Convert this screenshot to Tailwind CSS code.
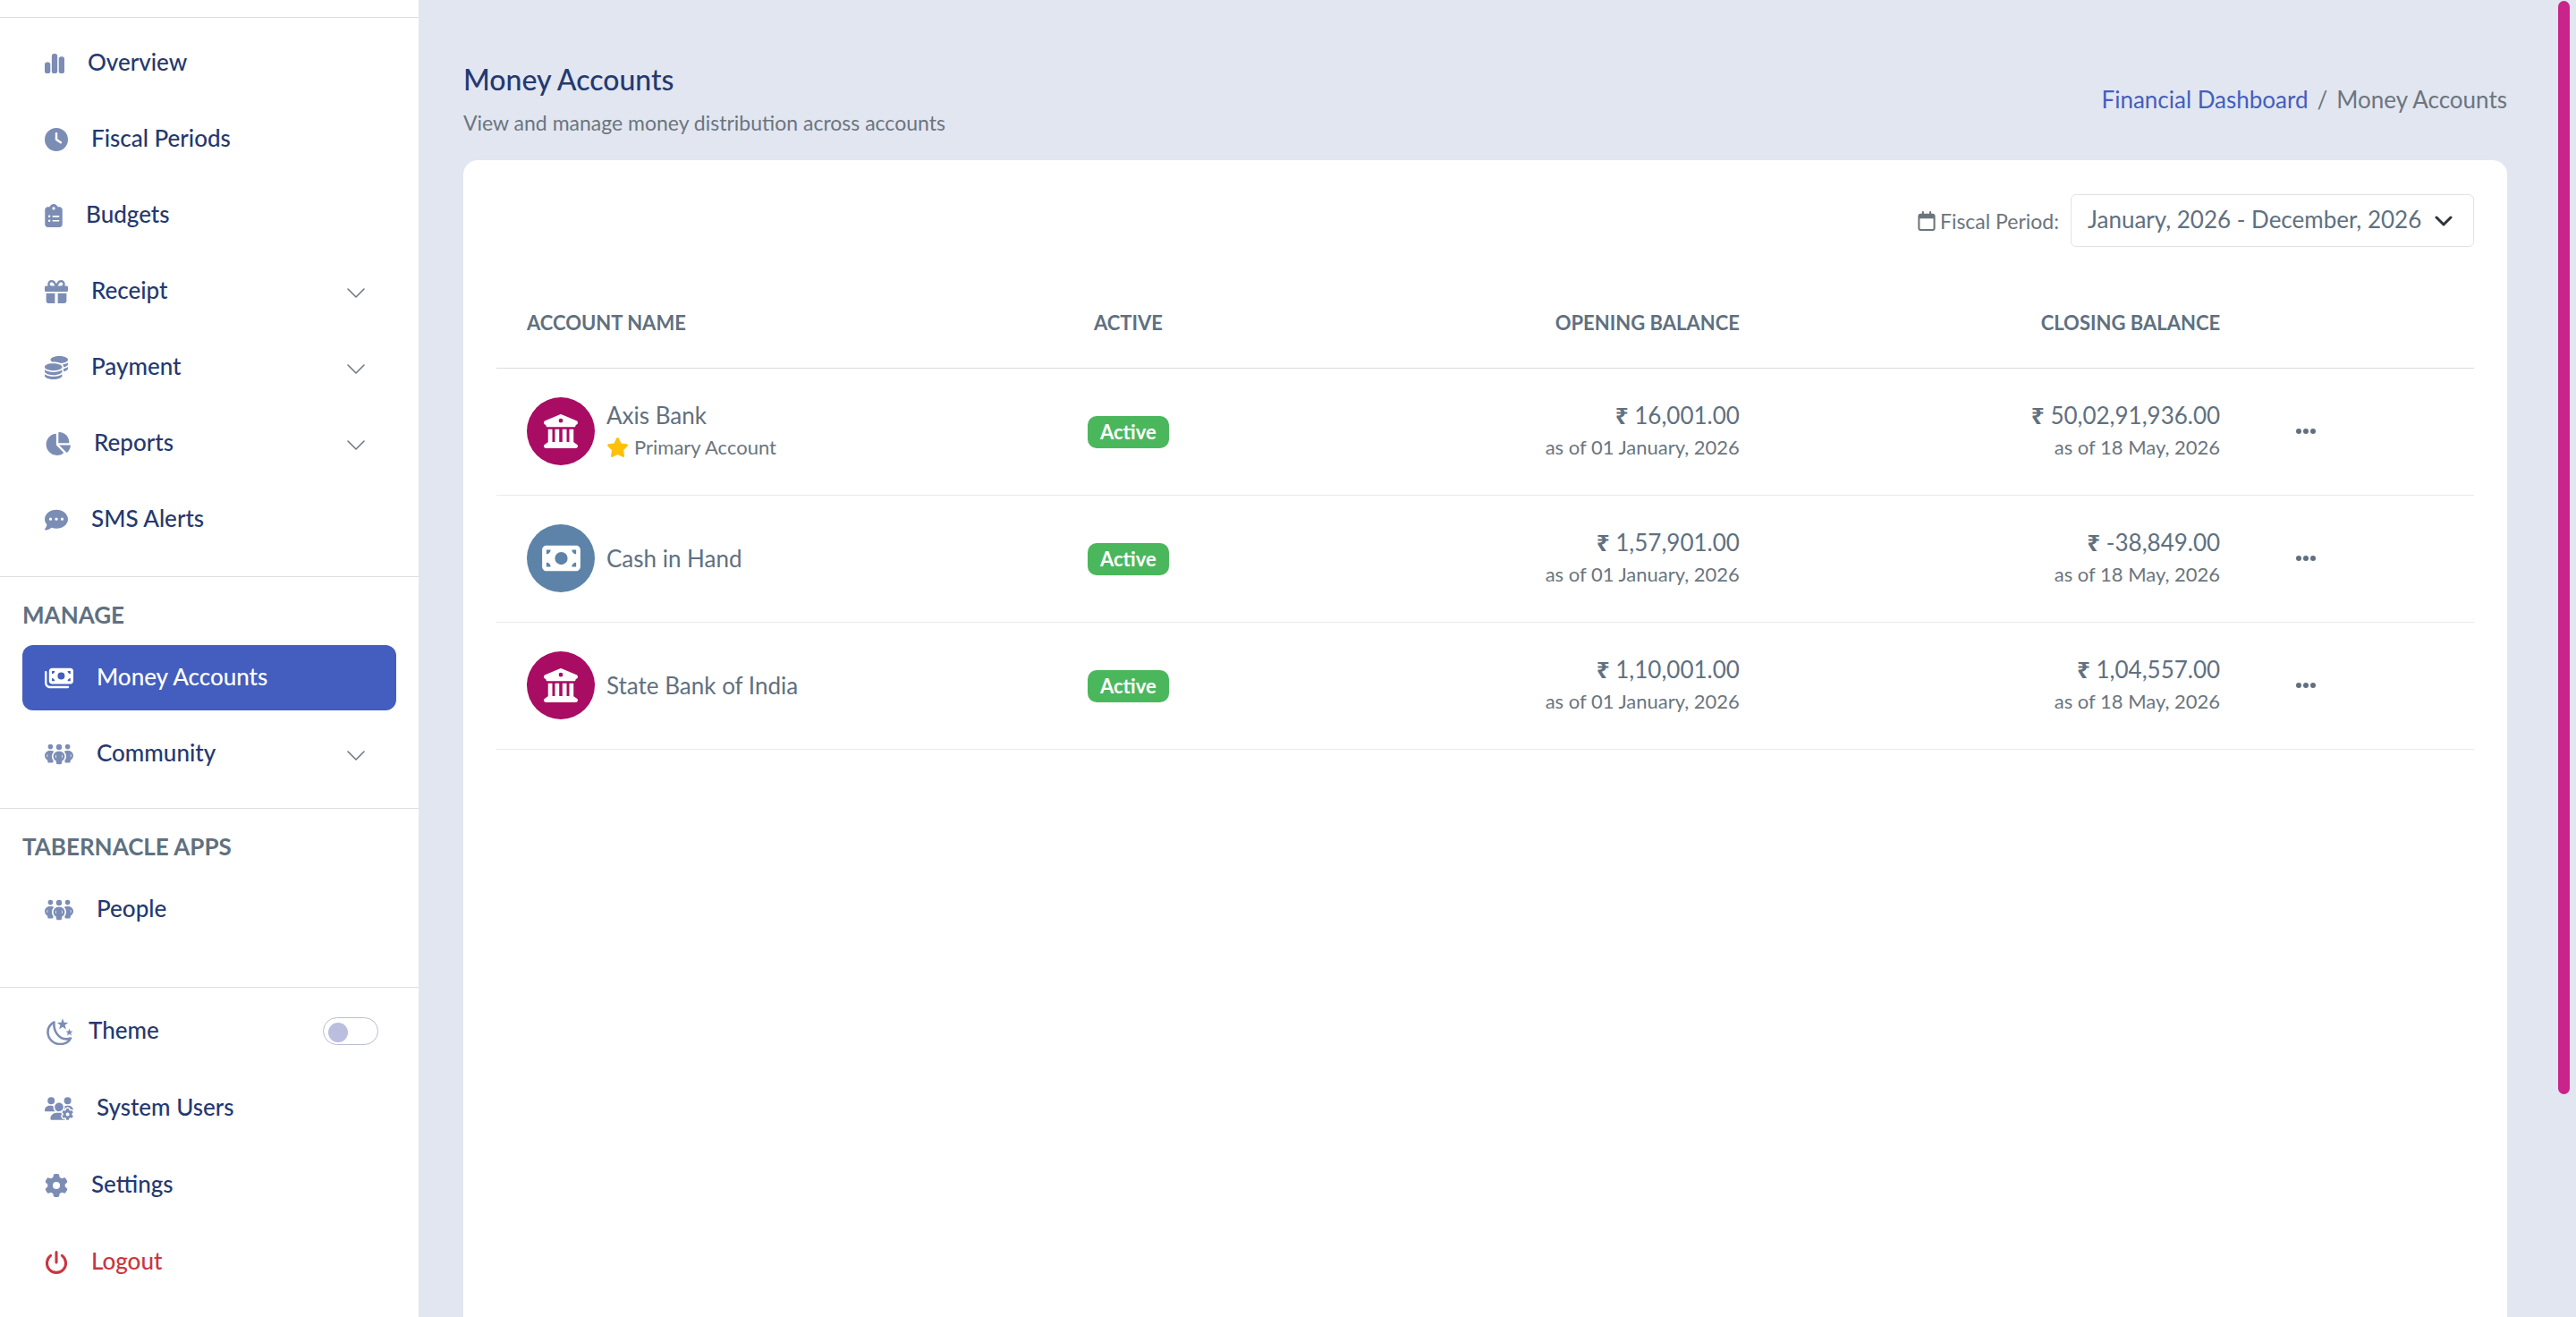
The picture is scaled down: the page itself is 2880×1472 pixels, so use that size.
<!DOCTYPE html>
<html lang="en">
<head>
<meta charset="utf-8">
<meta name="viewport" content="width=device-width, initial-scale=1">
<title>Money Accounts</title>
<script src="https://cdn.jsdelivr.net/npm/@tailwindcss/browser@4"></script>
</head>
<body class="flex min-h-screen bg-[#e2e6f1] font-['Lato','Noto_Sans',sans-serif] text-[26px] leading-9 text-[#607080]">

<!-- Shared icon shapes -->
<svg class="hidden" aria-hidden="true">
  <symbol id="people" viewBox="0 0 640 512"><path d="M72 88a56 56 0 1 1 112 0A56 56 0 1 1 72 88zM64 245.700C54 256.900 48 271.800 48 288s6 31.100 16 42.300V245.700zm144.400-49.300C178.700 222.700 160 261.200 160 304c0 34.300 12 65.800 32 90.500V416c0 17.700-14.300 32-32 32H96c-17.700 0-32-14.300-32-32V389.200C26.200 371.200 0 332.700 0 288c0-61.900 50.100-112 112-112h32c24 0 46.200 7.500 64.400 20.300zM448 416V394.500c20-24.700 32-56.200 32-90.500c0-42.800-18.700-81.300-48.400-107.700C449.800 183.500 472 176 496 176h32c61.900 0 112 50.100 112 112c0 44.700-26.200 83.200-64 101.200V416c0 17.700-14.300 32-32 32H480c-17.700 0-32-14.300-32-32zm8-328a56 56 0 1 1 112 0A56 56 0 1 1 456 88zM576 245.700v84.700c10-11.300 16-26.100 16-42.300s-6-31.100-16-42.300zM320 32a64 64 0 1 1 0 128 64 64 0 1 1 0-128zM240 304c0 16.200 6 31 16 42.300V261.700c-10 11.300-16 26.100-16 42.300zm144-42.300v84.700c10-11.300 16-26.100 16-42.300s-6-31.100-16-42.300zM448 304c0 44.700-26.200 83.200-64 101.200V448c0 17.700-14.300 32-32 32H288c-17.700 0-32-14.300-32-32V405.200c-37.800-18-64-56.500-64-101.200c0-61.900 50.100-112 112-112h32c61.900 0 112 50.100 112 112z"/></symbol>
  <symbol id="bank" viewBox="0 0 512 512"><path d="M243.400 2.600l-224 96c-14 6-21.800 21-18.700 35.800S16.800 160 32 160v8c0 13.300 10.700 24 24 24H456c13.300 0 24-10.700 24-24v-8c15.200 0 28.300-10.700 31.300-25.600s-4.800-29.900-18.700-35.800l-224-96c-8-3.400-17.200-3.400-25.200 0zM128 224H64V420.300c-.6 .3-1.200 .7-1.800 1.100l-48 32c-11.700 7.800-17 22.400-12.900 35.900S17.900 512 32 512H480c14.100 0 26.500-9.200 30.600-22.700s-1.100-28.100-12.900-35.900l-48-32c-.6-.4-1.200-.7-1.800-1.100V224H384V416H344V224H280V416H232V224H168V416H128V224zM256 64a32 32 0 1 1 0 64 32 32 0 1 1 0-64z"/></symbol>
  <symbol id="chevron" viewBox="0 0 20 12"><path d="M1 1l9 9 9-9" fill="none" stroke="currentColor" stroke-width="1.500" stroke-linecap="round"/></symbol>
  <symbol id="dots" viewBox="0 0 24 8"><circle cx="4" cy="4" r="3"/><circle cx="12" cy="4" r="3"/><circle cx="20" cy="4" r="3"/></symbol>
</svg>

<aside class="w-[468px] shrink-0 bg-white pt-[19px] font-medium text-[#25396f]">
  <nav aria-label="Main" class="[&_label]:pb-1 [&_span]:pb-1">
    <ul class="flex flex-col gap-3 border-t border-[#dcdfe2] px-[25px] pt-[14px] pb-[27px]">
      <li><a href="#" class="flex h-[73px] items-center gap-[26px] rounded-xl px-[25px]">
        <svg class="h-[26px] w-[22px] fill-[#7c8db5]" viewBox="0 0 448 512"><path d="M160 80c0-26.500 21.500-48 48-48h32c26.500 0 48 21.500 48 48V432c0 26.500-21.500 48-48 48H208c-26.500 0-48-21.500-48-48V80zM0 272c0-26.500 21.500-48 48-48H80c26.500 0 48 21.500 48 48V432c0 26.500-21.500 48-48 48H48c-26.500 0-48-21.500-48-48V272zM368 96h32c26.500 0 48 21.500 48 48V432c0 26.500-21.500 48-48 48H368c-26.500 0-48-21.500-48-48V144c0-26.500 21.500-48 48-48z"/></svg>
        <span>Overview</span></a></li>
      <li><a href="#" class="flex h-[73px] items-center gap-[26px] rounded-xl px-[25px]">
        <svg class="size-[26px] fill-[#7c8db5]" viewBox="0 0 512 512"><path fill-rule="evenodd" d="M256 0a256 256 0 1 1 0 512A256 256 0 1 1 256 0zM232 120V256c0 8 4 15.500 10.700 20l96 64c11 7.400 25.900 4.400 33.300-6.700s4.400-25.900-6.700-33.300L280 243.200V120c0-13.300-10.700-24-24-24s-24 10.700-24 24z"/></svg>
        <span>Fiscal Periods</span></a></li>
      <li><a href="#" class="flex h-[73px] items-center gap-[26px] rounded-xl px-[25px]">
        <svg class="h-[26px] w-[20px] fill-[#7c8db5]" viewBox="0 0 384 512"><path fill-rule="evenodd" d="M192 0c-41.800 0-77.400 26.700-90.500 64H64C28.700 64 0 92.700 0 128V448c0 35.300 28.700 64 64 64H320c35.300 0 64-28.700 64-64V128c0-35.300-28.700-64-64-64H282.500C269.400 26.700 233.800 0 192 0zm0 64a32 32 0 1 1 0 64 32 32 0 1 1 0-64zM72 272a24 24 0 1 1 48 0 24 24 0 1 1 -48 0zm104-16H304c8.800 0 16 7.200 16 16s-7.200 16-16 16H176c-8.800 0-16-7.200-16-16s7.200-16 16-16zM72 368a24 24 0 1 1 48 0 24 24 0 1 1 -48 0zm88 0c0-8.800 7.200-16 16-16H304c8.800 0 16 7.200 16 16s-7.200 16-16 16H176c-8.800 0-16-7.200-16-16z"/></svg>
        <span>Budgets</span></a></li>
      <li><a href="#" class="flex h-[73px] items-center gap-[26px] rounded-xl pr-[35px] pl-[25px]">
        <svg class="size-[26px] fill-[#7c8db5]" viewBox="0 0 512 512"><path d="M190.500 68.800L225.300 128H224 152c-22.100 0-40-17.900-40-40s17.900-40 40-40h2.200c14.900 0 28.800 7.900 36.300 20.800zM64 88c0 14.400 3.500 28 9.600 40H32c-17.700 0-32 14.300-32 32v64c0 17.700 14.300 32 32 32H480c17.700 0 32-14.300 32-32V160c0-17.700-14.300-32-32-32H438.400c6.100-12 9.600-25.600 9.600-40c0-48.600-39.400-88-88-88h-2.200c-31.900 0-61.500 16.900-77.700 44.400L256 85.500l-24.100-41C215.700 16.900 186.100 0 154.200 0H152C103.400 0 64 39.400 64 88zm336 0c0 22.100-17.900 40-40 40H288h-1.300l34.800-59.200C329.100 55.900 342.900 48 357.800 48H360c22.100 0 40 17.900 40 40zM32 288V464c0 26.500 21.500 48 48 48H224V288H32zM288 512H432c26.500 0 48-21.500 48-48V288H288V512z"/></svg>
        <span class="grow">Receipt</span>
        <svg class="mt-1 h-3 w-5 text-[#6c757d]"><use href="#chevron"/></svg></a></li>
      <li><a href="#" class="flex h-[73px] items-center gap-[26px] rounded-xl pr-[35px] pl-[25px]">
        <svg class="size-[26px] fill-[#7c8db5]" viewBox="0 0 512 512"><path d="M512 80c0 18-14.300 34.600-38.400 48c-29.100 16.100-72.500 27.500-122.300 30.900c-3.700-1.800-7.400-3.500-11.300-5C300.600 137.400 248.200 128 192 128c-8.300 0-16.400 .2-24.500 .6l-1.100-.6C142.300 114.600 128 98 128 80c0-44.200 86-80 192-80S512 35.800 512 80zM160.700 161.100c10.200-.7 20.700-1.100 31.300-1.100c62.200 0 117.400 12.300 152.500 31.400C369.300 204.900 384 221.700 384 240c0 4-.7 7.900-2.100 11.700c-4.600 13.200-17 25.300-35 35.500c-.4 .2-.9 .5-1.300 .7c-35 19.400-90.800 32-153.600 32c-59.600 0-112.900-11.300-148.200-29.100c-1.900-.9-3.700-1.900-5.500-2.900C14.300 274.600 0 258 0 240c0-34.800 53.400-64.500 128-75.400c10.500-1.500 21.400-2.700 32.700-3.500zM416 240c0-21.900-10.600-39.900-24.100-53.400c28.300-4.400 54.200-11.400 76.200-20.500c16.300-6.800 31.500-15.200 43.900-25.500V176c0 19.300-16.500 37.100-43.800 50.900c-14.600 7.400-32.400 13.700-52.400 18.500c.1-1.800 .2-3.500 .2-5.300zm-32 96c0 18-14.300 34.600-38.400 48c-1.800 1-3.600 1.900-5.500 2.900C304.900 404.700 251.600 416 192 416c-62.800 0-118.600-12.600-153.600-32C14.300 370.600 0 354 0 336V300.600c12.500 10.300 27.600 18.700 43.900 25.500C83.400 342.600 135.800 352 192 352s108.600-9.400 148.100-25.900c7.800-3.200 15.300-6.900 22.400-10.900c6.100-3.400 11.800-7.200 17.200-11.200c1.500-1.100 2.900-2.300 4.300-3.400V336zm32 0V278.100c19-4.200 36.500-9.500 52.100-16c16.300-6.800 31.500-15.200 43.900-25.500V272c0 10.500-5 21-14.900 30.900c-16.300 16.300-45 29.700-81.300 38.400c.1-1.700 .2-3.500 .2-5.300zM192 448c56.200 0 108.600-9.400 148.100-25.900c16.300-6.800 31.500-15.200 43.900-25.500V432c0 44.200-86 80-192 80S0 476.200 0 432V396.600c12.500 10.300 27.600 18.700 43.900 25.500C83.400 438.600 135.800 448 192 448z"/></svg>
        <span class="grow">Payment</span>
        <svg class="mt-1 h-3 w-5 text-[#6c757d]"><use href="#chevron"/></svg></a></li>
      <li><a href="#" class="flex h-[73px] items-center gap-[26px] rounded-xl pr-[35px] pl-[25px]">
        <svg class="h-[26px] w-[29px] fill-[#7c8db5]" viewBox="0 0 576 512"><path d="M304 240V16.600c0-9 7-16.600 16-16.600C443.700 0 544 100.300 544 224c0 9-7.600 16-16.600 16H304zM32 272C32 150.700 122.100 50.300 239 34.300c9.200-1.300 17 6.100 17 15.400V288L412.500 444.500c6.700 6.700 6.200 17.700-1.500 23.100C371.800 495.600 323.800 512 272 512C139.500 512 32 404.600 32 272zm526.400 16c9.300 0 16.600 7.800 15.400 17c-7.700 55.900-34.600 105.600-73.900 142.300c-6 5.600-15.400 5.200-21.200-.7L320 288H558.400z"/></svg>
        <span class="grow">Reports</span>
        <svg class="mt-1 h-3 w-5 text-[#6c757d]"><use href="#chevron"/></svg></a></li>
      <li><a href="#" class="flex h-[73px] items-center gap-[26px] rounded-xl px-[25px]">
        <svg class="size-[26px] fill-[#7c8db5]" viewBox="0 0 512 512"><path fill-rule="evenodd" d="M256 448c141.400 0 256-93.100 256-208S397.400 32 256 32S0 125.100 0 240c0 45.100 17.700 86.800 47.700 120.900c-1.900 24.500-11.400 46.300-21.400 62.900c-5.500 9.200-11.100 16.600-15.200 21.600c-2.100 2.500-3.700 4.400-4.900 5.700l-1.600 1.700c-4.600 4.600-5.900 11.400-3.400 17.400c2.500 6 8.300 9.900 14.800 9.900c28.700 0 57.600-8.900 81.600-19.300c22.900-10 42.400-21.900 54.300-30.600c31.800 11.500 67 17.900 104.100 17.900zM128 208a32 32 0 1 1 0 64 32 32 0 1 1 0-64zm128 0a32 32 0 1 1 0 64 32 32 0 1 1 0-64zm96 32a32 32 0 1 1 64 0 32 32 0 1 1 -64 0z"/></svg>
        <span>SMS Alerts</span></a></li>
    </ul>

    <section class="border-t border-[#dcdfe2] px-[25px] pt-6 pb-6">
      <h2 class="pb-4 font-bold text-[#607080]">MANAGE</h2>
      <ul class="flex flex-col gap-3">
        <li><a href="#" aria-current="page" class="flex h-[73px] items-center gap-[26px] rounded-xl bg-[#435ebe] px-[25px] text-white">
          <svg class="h-[26px] w-8 fill-white" viewBox="0 0 640 512"><path fill-rule="evenodd" d="M96 96c0-35.300 28.700-64 64-64H576c35.300 0 64 28.700 64 64V320c0 35.300-28.700 64-64 64H160c-35.300 0-64-28.700-64-64V96zm64 160v64h64c0-35.300-28.700-64-64-64zM224 96H160v64c35.300 0 64-28.700 64-64zM576 256c-35.300 0-64 28.700-64 64h64V256zM512 96c0 35.300 28.700 64 64 64V96H512zM288 208a80 80 0 1 0 160 0 80 80 0 1 0 -160 0zM48 120c0-13.300-10.700-24-24-24S0 106.700 0 120V360c0 66.300 53.700 120 120 120H520c13.300 0 24-10.700 24-24s-10.700-24-24-24H120c-39.800 0-72-32.200-72-72V120z"/></svg>
          <span>Money Accounts</span></a></li>
        <li><a href="#" class="flex h-[73px] items-center gap-[26px] rounded-xl pr-[35px] pl-[25px]">
          <svg class="h-[26px] w-8 fill-[#7c8db5]"><use href="#people"/></svg>
          <span class="grow">Community</span>
          <svg class="mt-1 h-3 w-5 text-[#6c757d]"><use href="#chevron"/></svg></a></li>
      </ul>
    </section>

    <section class="border-t border-[#dcdfe2] px-[25px] pt-6 pb-[50px]">
      <h2 class="pb-4 font-bold text-[#607080]">TABERNACLE APPS</h2>
      <a href="#" class="flex h-[73px] items-center gap-[26px] rounded-xl px-[25px]">
        <svg class="h-[26px] w-8 fill-[#7c8db5]"><use href="#people"/></svg>
        <span>People</span></a>
    </section>

    <ul class="flex flex-col gap-[13px] border-t border-[#dcdfe2] px-[25px] pt-3">
      <li class="flex h-[73px] items-center gap-[17px] pr-5 pl-[27px]">
        <svg class="size-[30px] fill-[#7c8db5]" viewBox="0 0 30 30"><path fill="none" stroke="#7c8db5" stroke-width="2.600" stroke-linejoin="round" d="M8.500 4.500C3.500 7 1.300 12 1.500 16.500C2 23.500 8 29 15 29C20.500 29 25 26.500 27 22.500C21 24.500 15.500 22.500 12 18C9 14 8 9 8.500 4.500z"/><path d="M18 .2l1.600 4.500 4.700.2-3.700 2.900 1.300 4.600-3.900-2.600-3.900 2.600 1.300-4.600-3.700-2.900 4.700-.2zM25.500 11.800l1.100 2.800 2.900.1-2.300 1.800.8 2.900-2.500-1.600-2.500 1.600.8-2.900-2.300-1.800 2.900-.1z"/></svg>
        <label for="theme" class="grow">Theme</label>
        <input id="theme" type="checkbox" role="switch" class="h-[31px] w-[62px] appearance-none rounded-full border border-[#b9bdd2] bg-white px-[5px] pt-[5px] before:block before:size-[22px] before:rounded-full before:bg-[#babfe0] checked:before:ml-auto">
      </li>
      <li><a href="#" class="flex h-[73px] items-center gap-[26px] rounded-xl px-[25px]">
        <svg class="h-[26px] w-8 fill-[#7c8db5]" viewBox="0 0 640 512"><path d="M144 160A80 80 0 1 0 144 0a80 80 0 1 0 0 160zm368 0A80 80 0 1 0 512 0a80 80 0 1 0 0 160zM0 298.700C0 310.400 9.600 320 21.300 320H234.700c.2 0 .4 0 .7 0c-26.600-23.500-43.300-57.800-43.300-96c0-7.600 .7-15 1.900-22.300c-13.600-6.300-28.700-9.700-44.600-9.700H106.700C47.800 192 0 239.800 0 298.700zM320 320c24 0 45.900-8.800 62.700-23.300c2.500-3.700 5.200-7.300 8-10.700c2.700-3.300 5.700-6.100 9-8.300C410 262.300 416 243.900 416 224c0-53-43-96-96-96s-96 43-96 96s43 96 96 96zm65.400 60.200c-10.300-5.900-18.100-16.200-20.800-28.200H261.300C187.700 352 128 411.700 128 485.300c0 14.700 11.900 26.700 26.700 26.700H455.200c-2.100-5.200-3.200-10.900-3.200-16.400v-3c-1.300-.7-2.700-1.500-4-2.300l-2.600 1.500c-16.800 9.700-40.500 8-54.700-9.700c-4.500-5.600-8.600-11.500-12.400-17.600l-2.600-4.500c-3.500-6.400-6.500-13-9.200-19.700c-8.200-21.200 2.200-42.600 19-52.300l2.700-1.500c0-1.500 0-3.100 0-4.600z"/><path d="M533.300 192H490.700c-15.900 0-31 3.500-44.600 9.700c1.300 7.200 1.900 14.700 1.900 22.300c0 17.400-3.500 33.900-9.700 49c2.500 .9 4.900 2 7.100 3.300l2.600 1.500c1.300-.8 2.600-1.600 4-2.300v-3c0-19.400 13.300-39.100 35.800-42.600c7.900-1.200 16-1.900 24.200-1.900s16.300 .6 24.200 1.900c22.500 3.500 35.800 23.200 35.800 42.600v3c1.300 .7 2.700 1.500 4 2.300l2.600-1.500c16.800-9.700 40.500-8 54.700 9.700c2.300 2.800 4.500 5.800 6.600 8.700c-2.100-57.100-49-102.700-106.600-102.700z"/><path fill-rule="evenodd" d="M624.600 355.900c6.300-3.600 9.500-11.100 6.800-18c-2.100-5.500-4.600-10.800-7.400-15.900l-2.300-4c-3.100-5.100-6.500-9.900-10.200-14.500c-4.600-5.700-12.700-6.700-19-3L574.400 311c-8.900-7.600-19.100-13.600-30.400-17.600v-21c0-7.300-4.900-13.800-12.100-14.900c-6.500-1-13.100-1.500-19.900-1.500s-13.400 .5-19.900 1.500c-7.200 1.100-12.100 7.600-12.100 14.900v21c-11.200 4-21.500 10-30.400 17.600l-18.200-10.500c-6.300-3.600-14.400-2.600-19 3c-3.700 4.600-7.100 9.500-10.200 14.600l-2.300 3.900c-2.800 5.100-5.300 10.400-7.400 15.900c-2.600 6.800 .5 14.300 6.800 17.900l18.200 10.500c-1 5.700-1.600 11.600-1.600 17.600s.6 11.900 1.600 17.500l-18.200 10.500c-6.300 3.600-9.500 11.100-6.800 17.900c2.100 5.500 4.600 10.700 7.400 15.800l2.400 4.100c3 5.100 6.400 9.900 10.100 14.500c4.600 5.700 12.700 6.700 19 3L449.600 457c8.900 7.600 19.200 13.600 30.400 17.600v21c0 7.300 4.900 13.800 12.100 14.900c6.500 1 13.100 1.500 19.900 1.500s13.400-.5 19.900-1.500c7.200-1.100 12.100-7.600 12.100-14.900v-21c11.200-4 21.500-10 30.400-17.600l18.200 10.500c6.300 3.600 14.400 2.600 19-3c3.700-4.600 7.100-9.400 10.100-14.500l2.400-4.200c2.800-5.100 5.300-10.300 7.400-15.800c2.600-6.800-.5-14.300-6.800-17.900l-18.200-10.500c1-5.700 1.600-11.600 1.600-17.500s-.6-11.900-1.600-17.600l18.200-10.500zM472 384a40 40 0 1 1 80 0 40 40 0 1 1 -80 0z"/></svg>
        <span>System Users</span></a></li>
      <li><a href="#" class="flex h-[73px] items-center gap-[26px] rounded-xl px-[25px]">
        <svg class="size-[26px] fill-[#7c8db5]" viewBox="0 0 512 512"><path fill-rule="evenodd" d="M495.900 166.600c3.200 8.700 .5 18.400-6.400 24.600l-43.300 39.400c1.100 8.300 1.700 16.800 1.700 25.400s-.6 17.100-1.700 25.400l43.300 39.400c6.900 6.200 9.600 15.900 6.400 24.600c-4.400 11.900-9.700 23.300-15.800 34.300l-4.700 8.100c-6.600 11-14 21.400-22.100 31.200c-5.900 7.200-15.700 9.600-24.500 6.800l-55.700-17.700c-13.400 10.300-28.200 18.900-44 25.400l-12.500 57.100c-2 9.100-9 16.300-18.200 17.800c-13.800 2.300-28 3.500-42.500 3.500s-28.700-1.200-42.500-3.500c-9.200-1.500-16.200-8.700-18.200-17.800l-12.500-57.100c-15.800-6.500-30.600-15.100-44-25.400L83.100 425.900c-8.800 2.800-18.600 .3-24.500-6.800c-8.100-9.800-15.500-20.200-22.100-31.200l-4.700-8.100c-6.100-11-11.400-22.400-15.800-34.300c-3.200-8.700-.5-18.400 6.400-24.600l43.300-39.400C64.600 273.100 64 264.600 64 256s.6-17.100 1.700-25.400L22.400 191.200c-6.900-6.200-9.600-15.900-6.400-24.600c4.400-11.900 9.700-23.300 15.800-34.300l4.700-8.100c6.600-11 14-21.400 22.100-31.200c5.900-7.200 15.700-9.600 24.500-6.800l55.700 17.700c13.400-10.300 28.200-18.900 44-25.400l12.500-57.100c2-9.100 9-16.300 18.200-17.800C227.300 1.200 241.500 0 256 0s28.700 1.200 42.500 3.500c9.200 1.500 16.200 8.700 18.200 17.800l12.500 57.100c15.800 6.500 30.600 15.100 44 25.400l55.700-17.700c8.800-2.800 18.600-.3 24.500 6.800c8.100 9.800 15.500 20.200 22.100 31.200l4.700 8.100c6.100 11 11.400 22.400 15.800 34.300zM256 336a80 80 0 1 0 0-160 80 80 0 1 0 0 160z"/></svg>
        <span>Settings</span></a></li>
      <li><a href="#" class="flex h-[73px] items-center gap-[26px] rounded-xl px-[25px] text-[#cb3541]">
        <svg class="size-[26px]" viewBox="0 0 512 512" fill="none" stroke="currentColor" stroke-width="60" stroke-linecap="round"><path d="M256 32V256M131 106A208 208 0 1 0 381 106"/></svg>
        <span>Logout</span></a></li>
    </ul>
  </nav>
</aside>

<main class="flex min-w-0 grow flex-col pr-[77px] pl-[50px]">
  <header class="flex items-center justify-between pt-[67px] pb-6">
    <div>
      <h1 class="text-[32px] leading-[44px] font-medium text-[#25396f]">Money Accounts</h1>
      <p class="pt-2 text-[23px] text-[#6c757d]">View and manage money distribution across accounts</p>
    </div>
    <nav aria-label="Breadcrumb">
      <ol class="flex gap-[10px] text-[#6c757d]">
        <li><a href="#" class="text-[#435ebe]">Financial Dashboard</a></li>
        <li aria-hidden="true">/</li>
        <li aria-current="page">Money Accounts</li>
      </ol>
    </nav>
  </header>

  <section class="grow rounded-t-2xl bg-white px-[37px] pt-[38px]">
    <div class="flex items-center justify-end">
      <svg class="mr-[5px] h-[22px] w-5 fill-[#6c757d]" viewBox="0 0 448 512"><path fill-rule="evenodd" d="M152 24c0-13.300-10.700-24-24-24s-24 10.700-24 24V64H64C28.700 64 0 92.700 0 128V448c0 35.300 28.700 64 64 64H384c35.300 0 64-28.700 64-64V128c0-35.300-28.700-64-64-64H344V24c0-13.300-10.700-24-24-24s-24 10.700-24 24V64H152V24zM48 192H400V448c0 8.800-7.200 16-16 16H64c-8.800 0-16-7.200-16-16V192z"/></svg>
      <label for="period" class="mr-[13px] text-[23px] text-[#6c757d]">Fiscal Period:</label>
      <div class="relative">
        <select id="period" class="h-[59px] appearance-none rounded-md border border-[#dfe3ea] bg-white pr-[57px] pb-1 pl-[18px] text-[#607080]">
          <option>January, 2026 - December, 2026</option>
        </select>
        <svg class="pointer-events-none absolute top-6 right-6 h-3 w-5" viewBox="0 0 20 12" fill="none" stroke="#2b3238" stroke-width="3" stroke-linecap="round" stroke-linejoin="round"><path d="M2 2l8 8 8-8"/></svg>
      </div>
    </div>

    <table class="mt-[36px] w-full table-fixed">
      <thead class="text-[22px]">
        <tr class="h-[99px] border-b border-[#d9dcdf]">
          <th scope="col" class="w-[28.2%] px-[34px] text-left">ACCOUNT NAME</th>
          <th scope="col" class="w-[7.5%]">ACTIVE</th>
          <th scope="col" class="w-[28.7%] px-[34px] text-right">OPENING BALANCE</th>
          <th scope="col" class="w-[24.3%] px-[34px] text-right">CLOSING BALANCE</th>
          <td class="w-[11.3%]"></td>
        </tr>
      </thead>
      <tbody>
        <tr class="h-[142px] border-b border-[#e8eaec]">
          <td class="px-[34px]">
            <div class="flex items-center gap-[13px]">
              <span class="flex size-[76px] shrink-0 items-center justify-center rounded-full bg-[#a90c63]"><svg class="size-[38px] fill-white"><use href="#bank"/></svg></span>
              <div>
                <div>Axis Bank</div>
                <div class="flex items-center gap-[6px] text-[22px] text-[#6c757d]">
                  <svg class="h-[22px] w-[25px] fill-[#fdc10a]" viewBox="0 0 576 512"><path d="M316.900 18C311.600 7 300.400 0 288.100 0s-23.400 7-28.800 18L195 150.300 51.400 171.500c-12 1.800-22 10.200-25.700 21.700s-.7 24.200 7.900 32.700L137.800 329 113.200 474.700c-2 12 3 24.200 12.900 31.300s23 8 33.800 2.300l128.300-68.500 128.300 68.500c10.800 5.700 23.900 4.900 33.800-2.300s14.900-19.300 12.900-31.300L438.500 329 542.700 225.900c8.600-8.500 11.700-21.200 7.900-32.700s-13.700-19.900-25.700-21.700L381.200 150.300 316.900 18z"/></svg>
                  Primary Account
                </div>
              </div>
            </div>
          </td>
          <td class="text-center"><span class="inline-block rounded-[10px] bg-[#4bb75d] px-[14px] text-[22px] font-bold text-white">Active</span></td>
          <td class="px-[34px] text-right"><div><span class="font-['Noto_Sans'] font-bold">₹</span> 16,001.00</div><div class="text-[22px] text-[#6c757d]">as of 01 January, 2026</div></td>
          <td class="px-[34px] text-right"><div><span class="font-['Noto_Sans'] font-bold">₹</span> 50,02,91,936.00</div><div class="text-[22px] text-[#6c757d]">as of 18 May, 2026</div></td>
          <td class="pl-[34px]"><button type="button" aria-label="Actions for Axis Bank" class="block px-4 py-3"><svg class="h-2 w-6 fill-[#607080]"><use href="#dots"/></svg></button></td>
        </tr>
        <tr class="h-[142px] border-b border-[#e8eaec]">
          <td class="px-[34px]">
            <div class="flex items-center gap-[13px]">
              <span class="flex size-[76px] shrink-0 items-center justify-center rounded-full bg-[#5d83a8]"><svg class="h-[38px] w-[43px] fill-white" viewBox="0 0 576 512"><path fill-rule="evenodd" d="M64 64C28.700 64 0 92.700 0 128V384c0 35.300 28.700 64 64 64H512c35.300 0 64-28.700 64-64V128c0-35.300-28.700-64-64-64H64zm64 320H64V320c35.300 0 64 28.700 64 64zM64 192V128h64c0 35.300-28.700 64-64 64zM448 384c0-35.300 28.700-64 64-64v64H448zm64-192c-35.300 0-64-28.700-64-64h64v64zM288 160a96 96 0 1 1 0 192 96 96 0 1 1 0-192z"/></svg></span>
              <div>Cash in Hand</div>
            </div>
          </td>
          <td class="text-center"><span class="inline-block rounded-[10px] bg-[#4bb75d] px-[14px] text-[22px] font-bold text-white">Active</span></td>
          <td class="px-[34px] text-right"><div><span class="font-['Noto_Sans'] font-bold">₹</span> 1,57,901.00</div><div class="text-[22px] text-[#6c757d]">as of 01 January, 2026</div></td>
          <td class="px-[34px] text-right"><div><span class="font-['Noto_Sans'] font-bold">₹</span> -38,849.00</div><div class="text-[22px] text-[#6c757d]">as of 18 May, 2026</div></td>
          <td class="pl-[34px]"><button type="button" aria-label="Actions for Cash in Hand" class="block px-4 py-3"><svg class="h-2 w-6 fill-[#607080]"><use href="#dots"/></svg></button></td>
        </tr>
        <tr class="h-[142px] border-b border-[#e8eaec]">
          <td class="px-[34px]">
            <div class="flex items-center gap-[13px]">
              <span class="flex size-[76px] shrink-0 items-center justify-center rounded-full bg-[#a90c63]"><svg class="size-[38px] fill-white"><use href="#bank"/></svg></span>
              <div>State Bank of India</div>
            </div>
          </td>
          <td class="text-center"><span class="inline-block rounded-[10px] bg-[#4bb75d] px-[14px] text-[22px] font-bold text-white">Active</span></td>
          <td class="px-[34px] text-right"><div><span class="font-['Noto_Sans'] font-bold">₹</span> 1,10,001.00</div><div class="text-[22px] text-[#6c757d]">as of 01 January, 2026</div></td>
          <td class="px-[34px] text-right"><div><span class="font-['Noto_Sans'] font-bold">₹</span> 1,04,557.00</div><div class="text-[22px] text-[#6c757d]">as of 18 May, 2026</div></td>
          <td class="pl-[34px]"><button type="button" aria-label="Actions for State Bank of India" class="block px-4 py-3"><svg class="h-2 w-6 fill-[#607080]"><use href="#dots"/></svg></button></td>
        </tr>
      </tbody>
    </table>
  </section>
</main>

<!-- Scroll position thumb -->
<div class="fixed top-px right-[7px] h-[83%] w-[13px] rounded-full bg-[#c9248b]"></div>
</body>
</html>
